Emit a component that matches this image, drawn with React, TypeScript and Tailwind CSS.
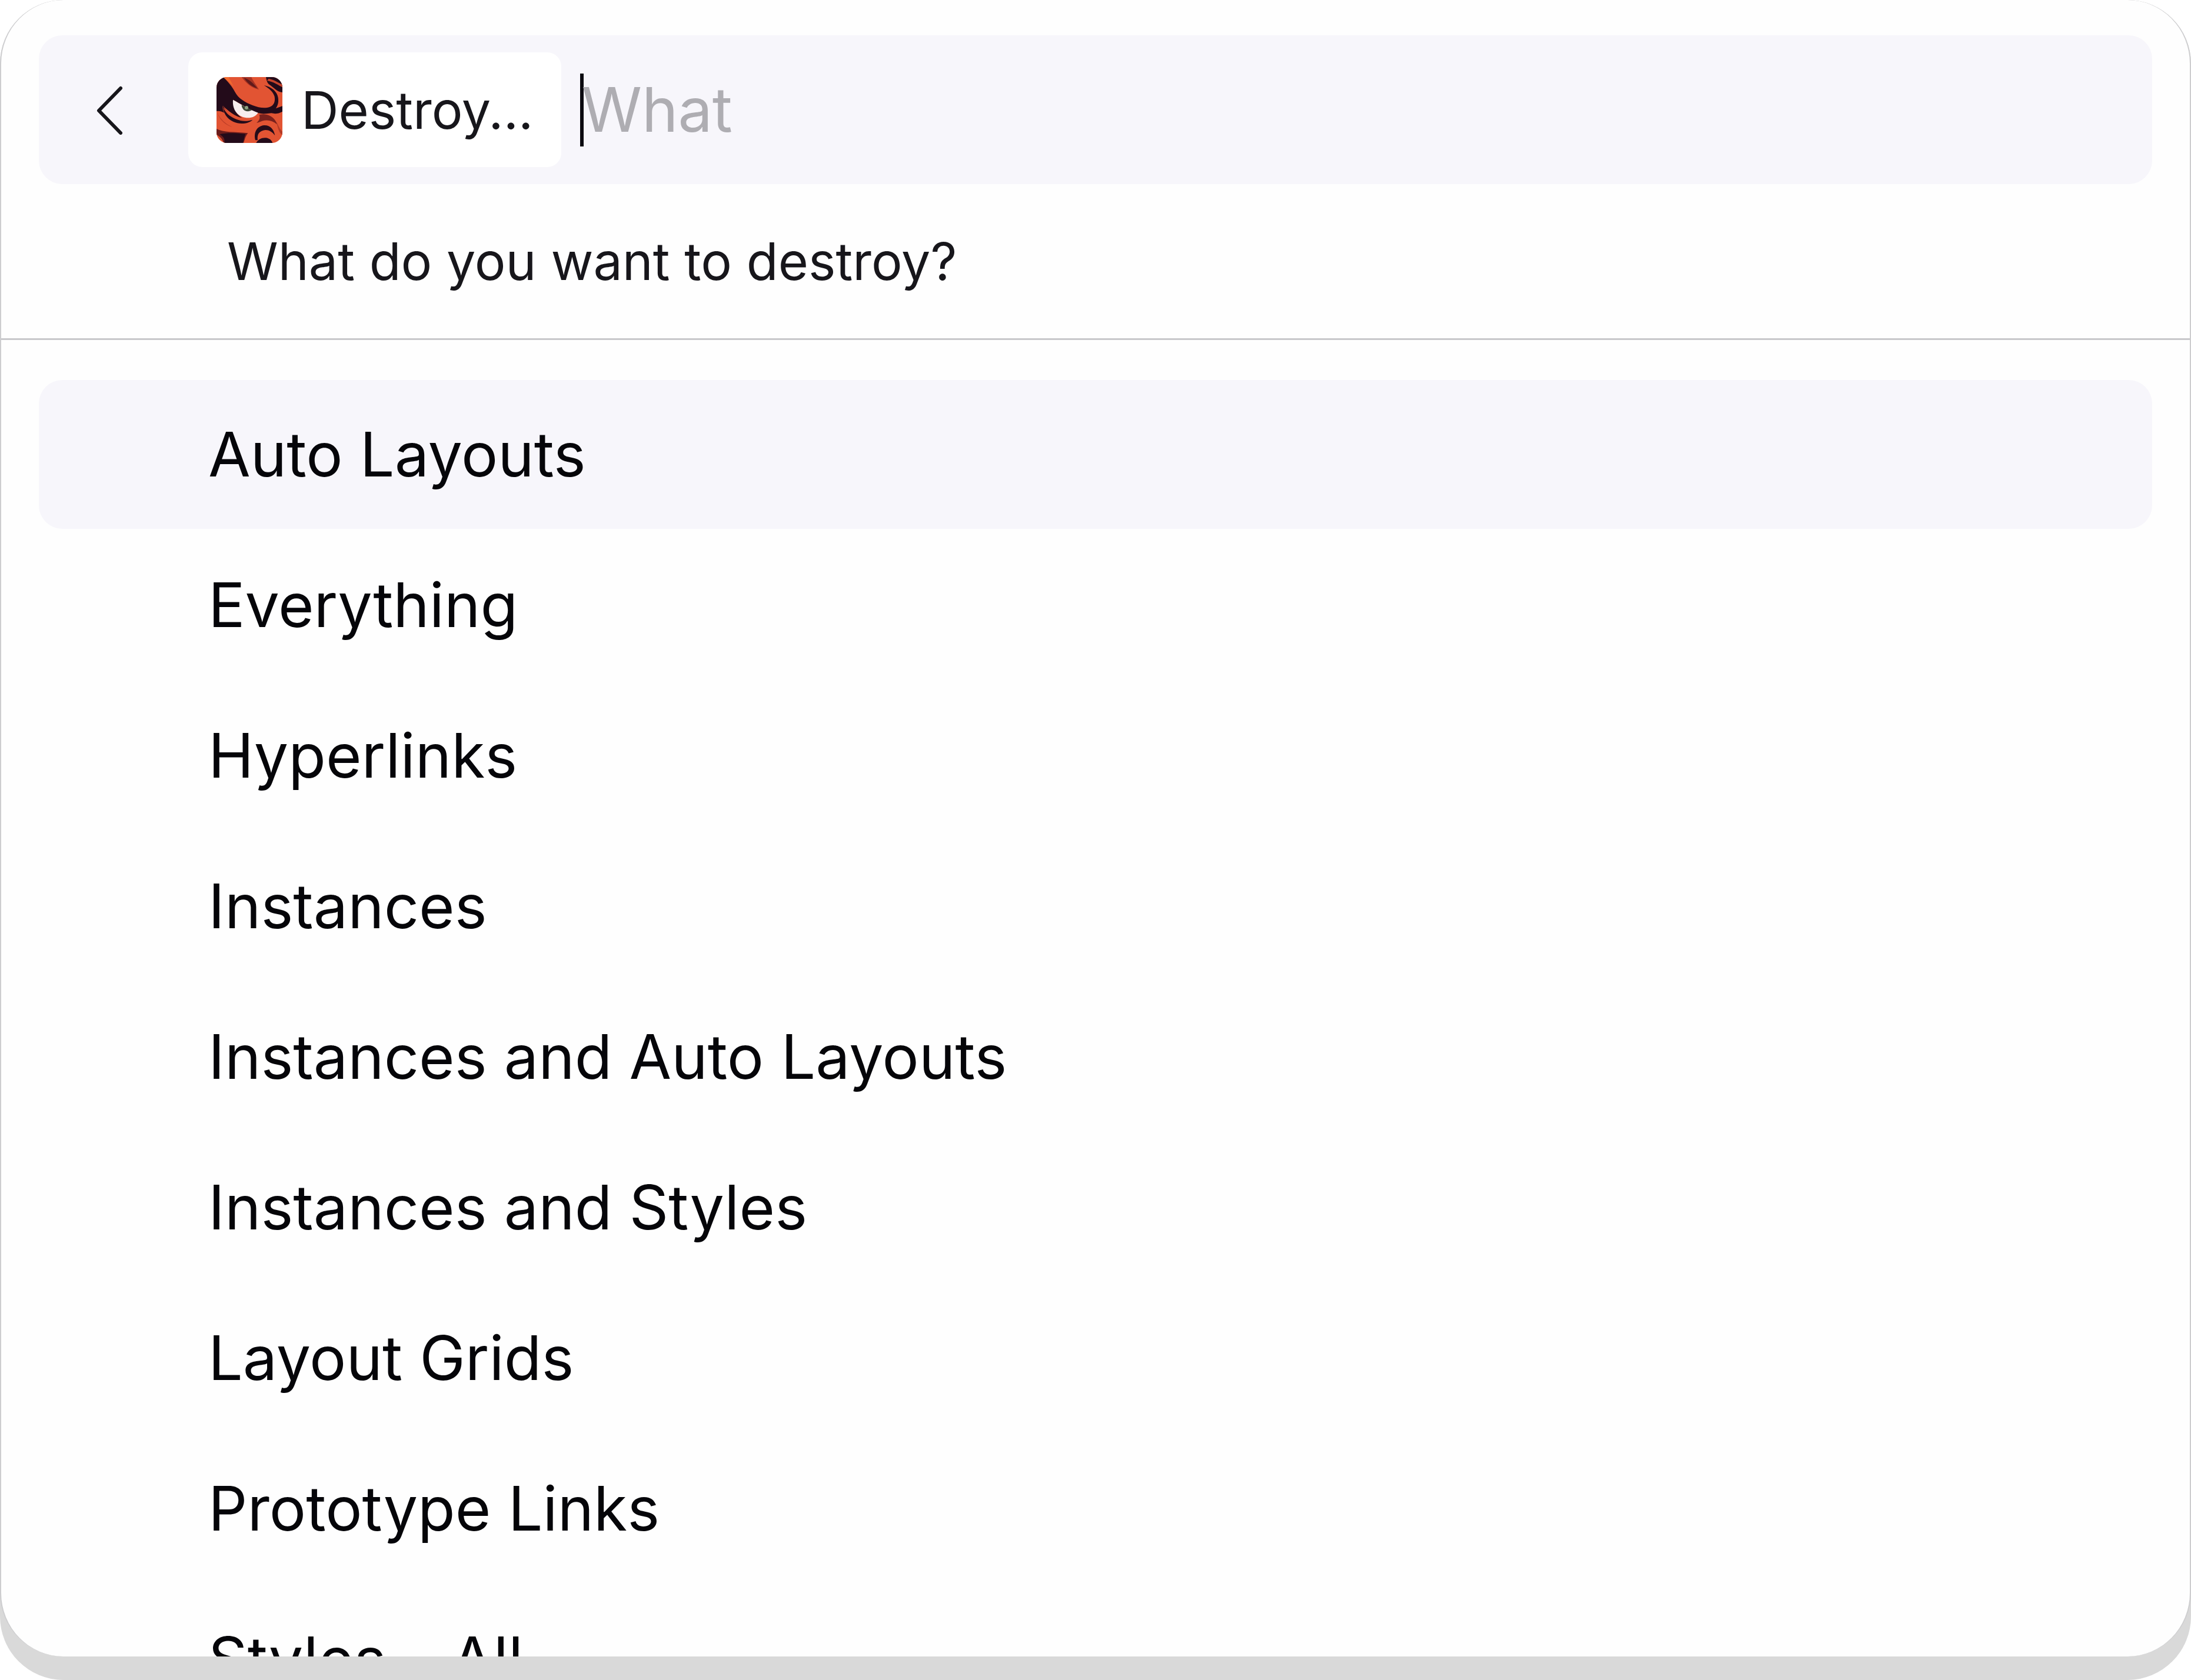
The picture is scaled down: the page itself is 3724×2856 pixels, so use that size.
import React, { useState } from 'react';

interface Option {
  id: string;
  label: string;
}

const OPTIONS: Option[] = [
  { id: 'auto-layouts', label: 'Auto Layouts' },
  { id: 'everything', label: 'Everything' },
  { id: 'hyperlinks', label: 'Hyperlinks' },
  { id: 'instances', label: 'Instances' },
  { id: 'instances-auto-layouts', label: 'Instances and Auto Layouts' },
  { id: 'instances-styles', label: 'Instances and Styles' },
  { id: 'layout-grids', label: 'Layout Grids' },
  { id: 'prototype-links', label: 'Prototype Links' },
  { id: 'styles-all', label: 'Styles – All' },
];

const ChevronLeft: React.FC = () => (
  <svg className="w-12 h-[84px]" viewBox="0 0 48 84" fill="none" stroke="#17161b" strokeWidth={6} strokeLinecap="round" strokeLinejoin="round">
    <path d="M43 5L6 43l37 38" />
  </svg>
);

const DestroyerIcon: React.FC = () => (
  <svg className="size-28 shrink-0 rounded-[18px]" viewBox="4 4 336 336">
    <rect x="4" y="4" width="336" height="336" fill="#e25433" />
    {/* temple and brow */}
    <path d="M4 4H38C58 22 84 52 98 80C114 112 150 134 188 148C220 160 250 166 276 156C298 148 304 128 300 104C294 80 272 62 246 46C284 54 312 76 318 108C322 134 316 150 306 164L340 152V180C320 192 300 192 284 188C262 190 240 194 218 188C184 178 148 152 88 120C86 160 108 198 134 212C100 206 62 176 36 150C34 166 38 176 44 186C30 180 20 176 4 178Z" fill="#230b1a" />
    <path d="M38 4H66L92 54C76 36 58 20 38 4Z" fill="#f06b2f" />
    {/* forehead creases */}
    <path d="M132 4H182C190 26 208 44 220 68C186 60 156 38 132 4Z" fill="#a83323" />
    <path d="M144 8C172 16 194 38 212 62C184 54 160 36 144 8Z" fill="#601a1b" />
    <path d="M256 4H312C326 10 336 20 340 32V82C314 82 296 56 270 40C262 32 258 18 256 4Z" fill="#230b1a" />
    <path d="M262 22C296 28 320 46 340 56V42C320 34 300 18 270 12Z" fill="#c7432b" />
    {/* eye */}
    <path d="M88 120C126 140 166 168 216 186C202 208 174 216 148 210C112 202 84 172 88 120Z" fill="#f7eeee" />
    <path d="M132 146C150 156 168 164 184 172C172 182 148 180 140 168C136 162 132 156 132 146Z" fill="#3c4635" />
    <circle cx="157" cy="160" r="9" fill="#8fa080" />
    {/* cheek */}
    <path d="M36 150C56 176 70 202 104 218C132 232 164 230 188 222C168 242 124 248 90 232C56 216 38 186 36 150Z" fill="#230b1a" />
    <path d="M38 158C58 178 76 200 104 212C136 222 168 220 194 212C168 226 126 228 98 216C68 204 48 184 38 158Z" fill="#dd5032" />
    <path d="M8 186C24 220 52 244 84 258C52 250 22 226 8 186Z" fill="#bd3d28" />
    <path d="M4 268C40 288 92 282 164 290C150 308 148 324 142 340H40C34 320 24 308 4 298Z" fill="#6b1c1b" />
    <path d="M20 296C60 286 110 290 152 294C144 312 144 326 138 340H44C48 318 38 308 20 296Z" fill="#230b1a" />
    {/* nose */}
    <path d="M222 196C252 190 296 196 314 246C288 224 262 220 236 228C222 234 216 236 208 238C226 222 226 210 222 196Z" fill="#7a211d" />
    <path d="M202 326C192 286 210 254 246 250C276 248 296 268 302 302C286 280 264 270 242 276C220 282 210 298 214 326Z" fill="#260c19" />
    <path d="M206 340C216 322 236 312 256 314C272 316 284 324 290 340Z" fill="#230b1a" />
    <path d="M310 232C316 264 322 288 340 300V282C326 270 320 252 310 232Z" fill="#b43a26" />
  </svg>
);

export default function App() {
  const [query, setQuery] = useState('');
  const [active, setActive] = useState('auto-layouts');

  return (
    <div className="h-screen bg-white font-['Inter',sans-serif] text-[#050509] [font-optical-sizing:none]">
      <div className="h-full pb-10 bg-[#d9d9d9] rounded-[108px]">
        <main className="h-full flex flex-col overflow-hidden bg-[#fefefe] rounded-[108px] border-x-2 border-[#cdcdcf]">
          <header className="shrink-0 px-16 pt-15 border-b-3 border-[#c8c8cb]">
            <div className="flex items-center h-[253px] rounded-[40px] bg-[#f7f6fb]">
              <button type="button" aria-label="Back" className="flex items-center shrink-0 w-[254px] h-full pl-24">
                <ChevronLeft />
              </button>
              <div className="flex items-center shrink-0 gap-8 h-[195px] px-12 rounded-3xl bg-white">
                <DestroyerIcon />
                <span className="text-[88px] leading-none text-[#17161b]">Destroy...</span>
              </div>
              <span className="shrink-0 w-1.5 h-[124px] ml-8 bg-[#0b0a10]" />
              <input
                type="text"
                aria-label="What"
                placeholder="What"
                value={query}
                onChange={(e) => setQuery(e.target.value)}
                className="flex-1 min-w-0 h-full -ml-1 pb-0.5 bg-transparent text-[104px] caret-transparent outline-none placeholder:text-[#aeadb2]"
              />
            </div>
            <p className="pt-16 pb-16 pl-80 text-[88px] leading-[134px] text-[#17161b]">What do you want to destroy?</p>
          </header>

          <ul className="flex-1 min-h-0 overflow-hidden px-16 pt-17">
            {OPTIONS.map((option) => (
              <li key={option.id} className="pb-[3px]">
                <button
                  type="button"
                  onClick={() => setActive(option.id)}
                  className={`flex items-center w-full h-[253px] pl-72 pb-px rounded-[40px] text-left text-[104px] leading-none ${
                    option.id === active ? 'bg-[#f7f6fb]' : ''
                  }`}
                >
                  {option.label}
                </button>
              </li>
            ))}
          </ul>
        </main>
      </div>
    </div>
  );
}
